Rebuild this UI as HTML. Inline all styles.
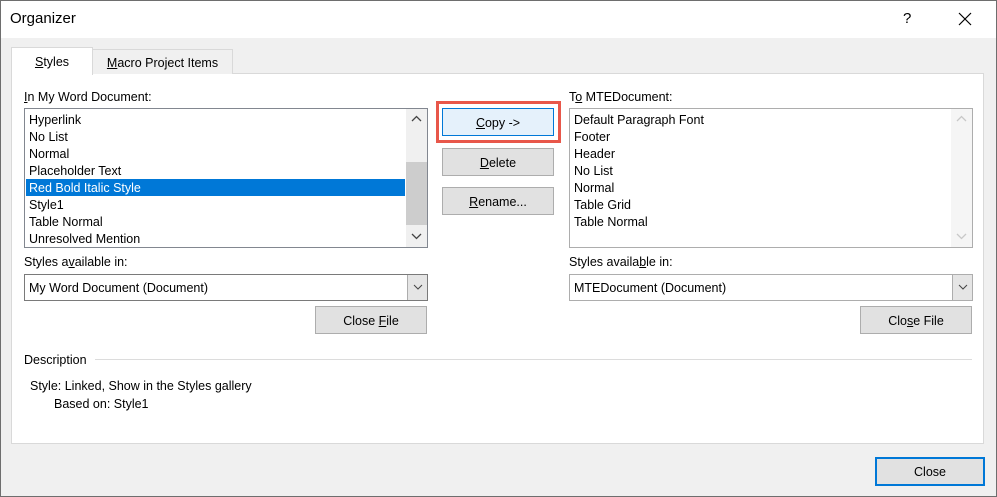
<!DOCTYPE html>
<html><head><meta charset="utf-8"><style>
*{box-sizing:border-box;margin:0;padding:0}
body{width:997px;height:497px;background:#f0f0f0;font-family:"Liberation Sans",sans-serif;font-size:12.5px;color:#000;position:relative;overflow:hidden}
.a{position:absolute}
.win{left:0;top:0;width:997px;height:497px;border:1px solid #6e6e6e}
.title{left:1px;top:1px;width:995px;height:37px;background:#fff}
.panel{left:11px;top:73px;width:973px;height:371px;background:#fff;border:1px solid #d9d9d9}
.list{background:#fff;border:1px solid #828790}
.item{position:absolute;left:4px;height:17px;line-height:19px;white-space:nowrap}
.btn{background:#e1e1e1;border:1px solid #adadad;text-align:center;line-height:28px}
.combo{background:#fff;border:1px solid #7a7a7a;line-height:26px;padding-left:4px}
.dd{position:absolute;right:0;top:0;width:20px;height:25px;background:#e5e5e5;border-left:1px solid #adadad}
u{text-decoration:underline}
</style></head><body>
<div class="a win"></div>
<div class="a title"></div>
<div class="a" style="left:10px;top:10px;font-size:15px">Organizer</div>
<div class="a" style="left:903px;top:10px;font-size:15px">?</div>
<svg class="a" style="left:958px;top:12px" width="14" height="14"><path d="M1 1L13 13M13 1L1 13" stroke="#000" stroke-width="1.2"/></svg>

<div class="a panel"></div>
<div class="a" style="left:92px;top:49px;width:141px;height:25px;background:#f0f0f0;border:1px solid #d9d9d9;border-bottom:none;text-align:center;line-height:27px"><u>M</u>acro Project Items</div>
<div class="a" style="left:11px;top:47px;width:82px;height:28px;background:#fff;border:1px solid #d9d9d9;border-bottom:none;text-align:center;line-height:29px"><u>S</u>tyles</div>

<div class="a" style="left:24px;top:90px"><u>I</u>n My Word Document:</div>
<div class="a list" style="left:24px;top:108px;width:404px;height:140px">
 <div class="item" style="top:2px">Hyperlink</div>
 <div class="item" style="top:19px">No List</div>
 <div class="item" style="top:36px">Normal</div>
 <div class="item" style="top:53px">Placeholder Text</div>
 <div class="a" style="left:1px;top:70px;width:379px;height:17px;background:#0078d7"></div>
 <div class="item" style="top:70px;color:#fff">Red Bold Italic Style</div>
 <div class="item" style="top:87px">Style1</div>
 <div class="item" style="top:104px">Table Normal</div>
 <div class="item" style="top:121px">Unresolved Mention</div>
 <div class="a" style="left:381px;top:0;width:21px;height:138px;background:#f0f0f0"></div>
 <div class="a" style="left:381px;top:53px;width:21px;height:63px;background:#cdcdcd"></div>
 <svg class="a" style="left:386px;top:6px" width="11" height="8"><path d="M1 6L5.5 1.5L10 6" stroke="#444" fill="none" stroke-width="1.3"/></svg>
 <svg class="a" style="left:386px;top:123px" width="11" height="8"><path d="M1 2L5.5 6.5L10 2" stroke="#444" fill="none" stroke-width="1.3"/></svg>
</div>
<div class="a" style="left:24px;top:255px">Styles a<u>v</u>ailable in:</div>
<div class="a combo" style="left:24px;top:274px;width:404px;height:27px">My Word Document (Document)<div class="dd"><svg style="position:absolute;left:5px;top:9px" width="10" height="6"><path d="M1 1L5 5L9 1" stroke="#444" fill="none"/></svg></div></div>
<div class="a btn" style="left:315px;top:306px;width:112px;height:28px">Close <u>F</u>ile</div>

<div class="a" style="left:436px;top:101px;width:125px;height:42px;border:3px solid #e8574a"></div>
<div class="a btn" style="left:442px;top:108px;width:112px;height:28px;background:#e5f1fb;border-color:#0078d7"><u>C</u>opy -&gt;</div>
<div class="a btn" style="left:442px;top:148px;width:112px;height:28px"><u>D</u>elete</div>
<div class="a btn" style="left:442px;top:187px;width:112px;height:28px"><u>R</u>ename...</div>

<div class="a" style="left:569px;top:90px">T<u>o</u> MTEDocument:</div>
<div class="a list" style="left:569px;top:108px;width:404px;height:140px;border-color:#adadad">
 <div class="item" style="top:2px">Default Paragraph Font</div>
 <div class="item" style="top:19px">Footer</div>
 <div class="item" style="top:36px">Header</div>
 <div class="item" style="top:53px">No List</div>
 <div class="item" style="top:70px">Normal</div>
 <div class="item" style="top:87px">Table Grid</div>
 <div class="item" style="top:104px">Table Normal</div>
 <div class="a" style="left:381px;top:0;width:21px;height:138px;background:#f5f5f5"></div>
 <svg class="a" style="left:386px;top:6px" width="11" height="8"><path d="M1 6L5.5 1.5L10 6" stroke="#c8c8c8" fill="none" stroke-width="1.3"/></svg>
 <svg class="a" style="left:386px;top:123px" width="11" height="8"><path d="M1 2L5.5 6.5L10 2" stroke="#c8c8c8" fill="none" stroke-width="1.3"/></svg>
</div>
<div class="a" style="left:569px;top:255px">Styles availa<u>b</u>le in:</div>
<div class="a combo" style="left:569px;top:274px;width:404px;height:27px;border-color:#adadad">MTEDocument (Document)<div class="dd"><svg style="position:absolute;left:5px;top:9px" width="10" height="6"><path d="M1 1L5 5L9 1" stroke="#444" fill="none"/></svg></div></div>
<div class="a btn" style="left:860px;top:306px;width:112px;height:28px">Clo<u>s</u>e File</div>

<div class="a" style="left:24px;top:353px">Description</div>
<div class="a" style="left:95px;top:359px;width:877px;height:1px;background:#dcdcdc"></div>
<div class="a" style="left:30px;top:379px">Style: Linked, Show in the Styles gallery</div>
<div class="a" style="left:54px;top:397px">Based on: Style1</div>

<div class="a btn" style="left:875px;top:457px;width:110px;height:29px;border:2px solid #0078d7;line-height:27px">Close</div>
</body></html>
